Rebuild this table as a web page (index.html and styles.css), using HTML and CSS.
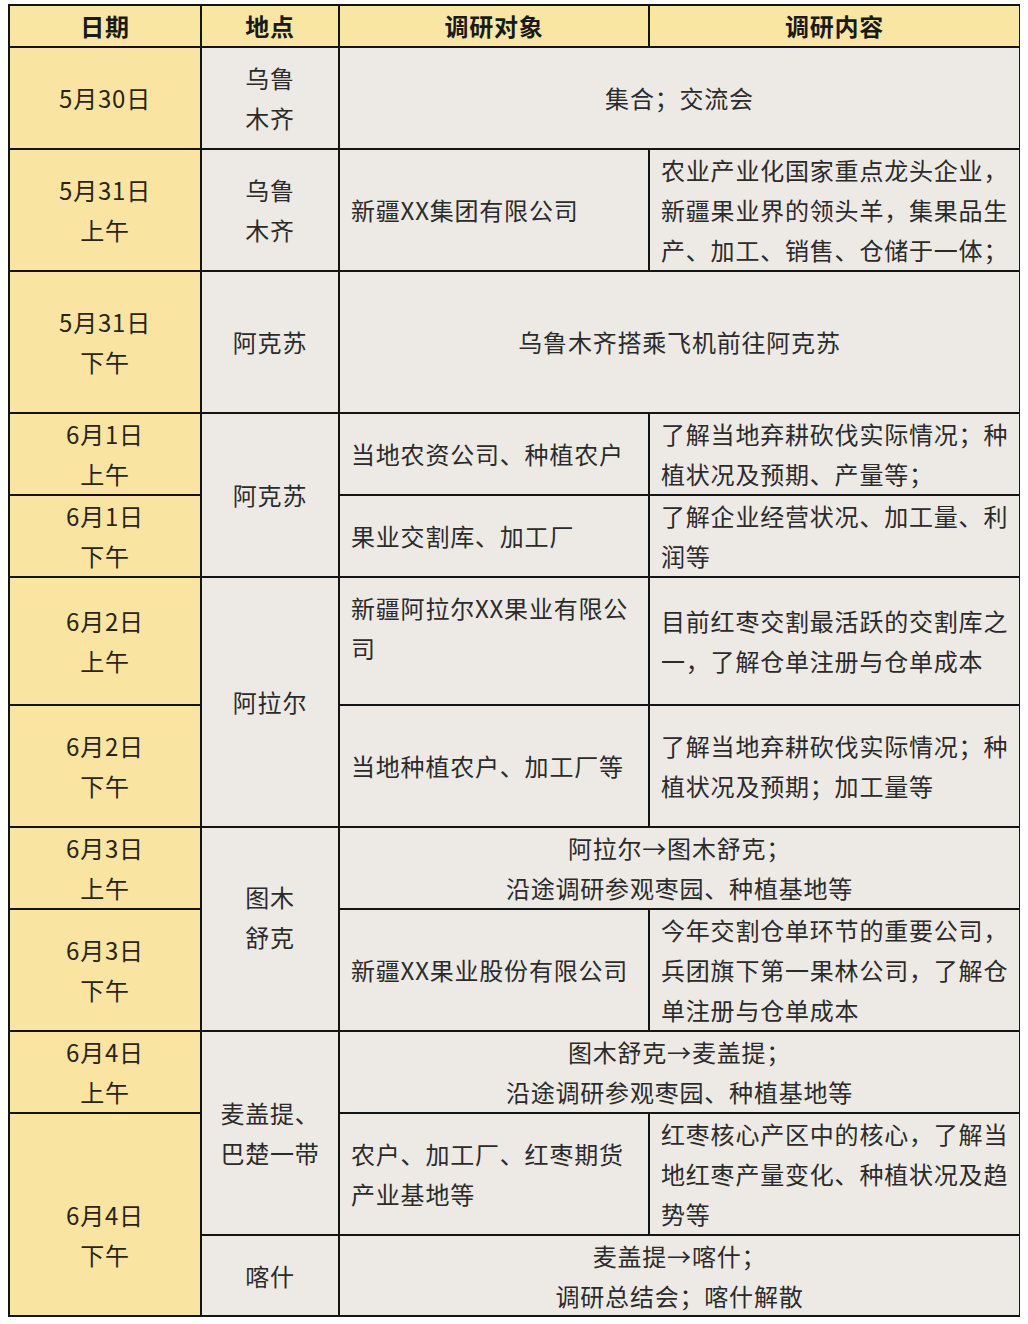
FILE: index.html
```html
<!DOCTYPE html>
<html lang="zh-CN">
<head>
<meta charset="utf-8">
<title>调研行程</title>
<link rel="stylesheet" href="styles.css">
</head>
<body>
<div class="schedule">
  <div class="cell head">日期</div>
  <div class="cell head">地点</div>
  <div class="cell head">调研对象</div>
  <div class="cell head">调研内容</div>

  <div class="cell date">5月30日</div>
  <div class="cell place">乌鲁<br>木齐</div>
  <div class="cell merged span-c2">集合；交流会</div>

  <div class="cell date">5月31日<br>上午</div>
  <div class="cell place">乌鲁<br>木齐</div>
  <div class="cell left">新疆XX集团有限公司</div>
  <div class="cell left">农业产业化国家重点龙头企业，<br>新疆果业界的领头羊，集果品生<br>产、加工、销售、仓储于一体；</div>

  <div class="cell date">5月31日<br>下午</div>
  <div class="cell place">阿克苏</div>
  <div class="cell merged span-c2">乌鲁木齐搭乘飞机前往阿克苏</div>

  <div class="cell date">6月1日<br>上午</div>
  <div class="cell place span-r2">阿克苏</div>
  <div class="cell left">当地农资公司、种植农户</div>
  <div class="cell left">了解当地弃耕砍伐实际情况；种<br>植状况及预期、产量等；</div>

  <div class="cell date">6月1日<br>下午</div>
  <div class="cell left">果业交割库、加工厂</div>
  <div class="cell left">了解企业经营状况、加工量、利<br>润等</div>

  <div class="cell date">6月2日<br>上午</div>
  <div class="cell place span-r2">阿拉尔</div>
  <div class="cell left top">新疆阿拉尔XX果业有限公<br>司</div>
  <div class="cell left">目前红枣交割最活跃的交割库之<br>一，了解仓单注册与仓单成本</div>

  <div class="cell date">6月2日<br>下午</div>
  <div class="cell left">当地种植农户、加工厂等</div>
  <div class="cell left">了解当地弃耕砍伐实际情况；种<br>植状况及预期；加工量等</div>

  <div class="cell date">6月3日<br>上午</div>
  <div class="cell place span-r2 raised">图木<br>舒克</div>
  <div class="cell merged span-c2">阿拉尔→图木舒克；<br>沿途调研参观枣园、种植基地等</div>

  <div class="cell date">6月3日<br>下午</div>
  <div class="cell left">新疆XX果业股份有限公司</div>
  <div class="cell left">今年交割仓单环节的重要公司，<br>兵团旗下第一果林公司，了解仓<br>单注册与仓单成本</div>

  <div class="cell date">6月4日<br>上午</div>
  <div class="cell place span-r2">麦盖提、<br>巴楚一带</div>
  <div class="cell merged span-c2">图木舒克→麦盖提；<br>沿途调研参观枣园、种植基地等</div>

  <div class="cell date span-r2 lowered">6月4日<br>下午</div>
  <div class="cell left">农户、加工厂、红枣期货<br>产业基地等</div>
  <div class="cell left">红枣核心产区中的核心，了解当<br>地红枣产量变化、种植状况及趋<br>势等</div>

  <div class="cell place">喀什</div>
  <div class="cell merged span-c2">麦盖提→喀什；<br>调研总结会；喀什解散</div>
</div>
</body>
</html>
```

FILE: styles.css
```css
html, body {
  background: #ffffff;
}

body {
  margin: 4px 8px;
  font-family: "Noto Sans CJK SC", "Noto Sans", sans-serif;
  font-size: 24px;
  color: #2b2b2b;
}

.schedule {
  display: grid;
  width: 1013px;
  box-sizing: border-box;
  grid-template-columns: 190px 136px 308px 369px;
  grid-template-rows: 40px 100px 120px 140px 80px 80px 126px 120px 80px 120px 80px 120px 79px;
  gap: 2px;
  padding: 2px;
  background: #141414;
}

.cell {
  display: flex;
  align-items: center;
  justify-content: center;
  text-align: center;
  line-height: 40px;
  letter-spacing: 0.8px;
  white-space: nowrap;
  background: #edeae5;
}

.head {
  background: #f9e6a2;
  font-weight: 700;
  color: #1a1a1a;
}

.date {
  background: #f9e5a1;
  color: #2a2416;
}

.left {
  justify-content: flex-start;
  text-align: left;
  padding: 0 2px 0 11px;
}

.top {
  align-items: flex-start;
  padding-top: 10px;
}

.raised {
  padding-bottom: 24px;
}

.lowered {
  padding-top: 40px;
}

.span-c2 {
  grid-column: span 2;
}

.span-r2 {
  grid-row: span 2;
}
```
